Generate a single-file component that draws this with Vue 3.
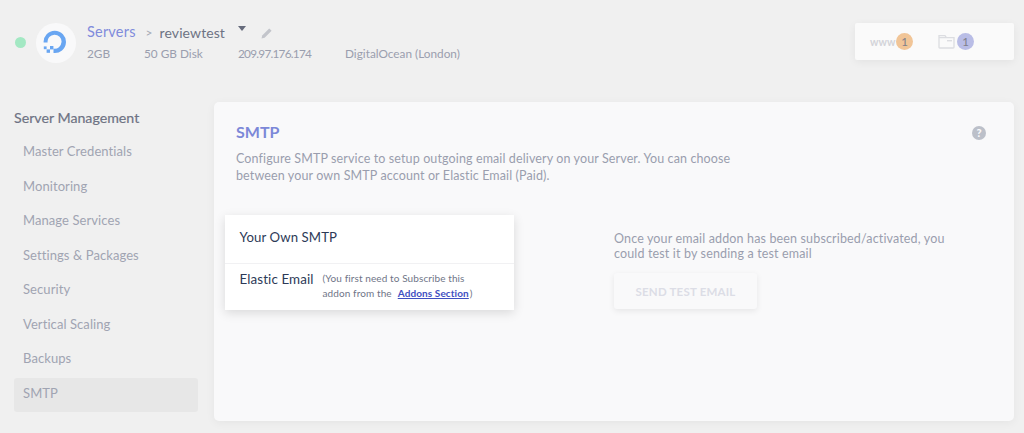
<script setup>
const items = ['Master Credentials','Monitoring','Manage Services','Settings & Packages','Security','Vertical Scaling','Backups','SMTP']
</script>

<template>
  <div class="page">
    <header class="top">
      <span class="dot"></span>
      <div class="logo">
        <svg width="26" height="26" viewBox="0 0 26 26">
          <path d="M10.5 23 V18.6 A7 7 0 1 0 4.6 12.5 H0.6 A11.2 11.2 0 1 1 10.5 23 Z" fill="#69a6f2"/>
          <rect x="7" y="16" width="3.4" height="3.4" fill="#69a6f2"/>
          <rect x="3.6" y="19.4" width="3.4" height="3.4" fill="#69a6f2"/>
          <rect x="0.8" y="16.4" width="2.8" height="2.8" fill="#69a6f2"/>
        </svg>
      </div>
      <div class="info">
        <div class="crumbs">
          <span class="servers">Servers</span>
          <span class="gt">&gt;</span>
          <span class="name">reviewtest</span>
          <span class="caret"></span>
          <svg class="pencil" width="12" height="12" viewBox="0 0 12 12"><path d="M0.5 11.5 L1.2 8.4 L8.2 1.4 L10.6 3.8 L3.6 10.8 Z" fill="#c3c5cb"/></svg>
        </div>
        <div class="meta">
          <span class="m1">2GB</span>
          <span class="m2">50 GB Disk</span>
          <span class="m3">209.97.176.174</span>
          <span>DigitalOcean (London)</span>
        </div>
      </div>
      <div class="widgets">
        <span class="www">www</span>
        <span class="badge orange">1</span>
        <svg class="folder" width="17" height="15" viewBox="0 0 17 15">
          <path d="M1 13.2 V1.6 H7 L8.4 3.6 H16 V13.2 Q16 14 15.2 14 H1.8 Q1 14 1 13.2 Z M1 3.6 H8.4" fill="none" stroke="#dcdde1" stroke-width="1.3"/>
          <rect x="9" y="6" width="5" height="1.4" fill="#dcdde1"/>
        </svg>
        <span class="badge purple">1</span>
      </div>
    </header>

    <div class="body">
      <aside class="side">
        <h3>Server Management</h3>
        <a v-for="i in items" :key="i" class="item" :class="{ active: i === 'SMTP' }">{{ i }}</a>
      </aside>

      <main class="card">
        <div class="head">
          <div>
            <h2>SMTP</h2>
            <p class="desc">Configure SMTP service to setup outgoing email delivery on your Server. You can choose between your own SMTP account or Elastic Email (Paid).</p>
          </div>
          <span class="help">?</span>
        </div>
        <div class="cols">
          <div class="options">
            <div class="opt first">Your Own SMTP</div>
            <div class="opt second">
              <span class="label">Elastic Email</span>
              <div class="note">
                <span>(You first need to Subscribe this</span>
                <div class="note-row">
                  <span>addon from the</span>
                  <a class="link">Addons Section</a>
                  <span class="close">)</span>
                </div>
              </div>
            </div>
          </div>
          <div class="test">
            <p>Once your email addon has been subscribed/activated, you could test it by sending a test email</p>
            <button class="btn">SEND TEST EMAIL</button>
          </div>
        </div>
      </main>
    </div>
  </div>
</template>

<style scoped>
.page {
  width: 1024px;
  height: 433px;
  overflow: hidden;
  background: #f0f0f0;
  font-family: "Lato", "Open Sans", sans-serif;
  color: #9a9eae;
  box-sizing: border-box;
}
.top {
  height: 102px;
  box-sizing: border-box;
  padding: 23px 10px 0 15px;
  display: flex;
  align-items: flex-start;
}
.dot {
  width: 11px;
  height: 11px;
  border-radius: 50%;
  background: #a3e8c3;
  margin: 14px 10px 0 0;
}
.logo {
  width: 40px;
  height: 40px;
  border-radius: 50%;
  background: #f9f9fa;
  display: flex;
  align-items: center;
  justify-content: center;
  margin-right: 11px;
}
.info { flex: 1; }
.crumbs {
  display: flex;
  align-items: center;
  height: 19px;
  margin-top: -1px;
}
.servers { font-size: 14.5px; color: #7f8bdc; letter-spacing: .2px; }
.gt { font-size: 12px; color: #a5a8b4; margin: 2px 7px 0 10px; }
.name { font-size: 14px; color: #6e7384; letter-spacing: .1px; margin-top: 2px; }
.caret {
  width: 0;
  height: 0;
  border-left: 4px solid transparent;
  border-right: 4px solid transparent;
  border-top: 5px solid #666b7c;
  margin: -7px 0 0 13px;
}
.pencil { margin: 3px 0 0 15px; }
.meta {
  display: flex;
  font-size: 11.8px;
  margin-top: 5px;
  color: #9a9eae;
}
.m1 { width: 57px; }
.m2 { width: 94px; }
.m3 { width: 107px; letter-spacing: -.75px; }
.widgets {
  width: 159px;
  height: 37px;
  background: #fafafa;
  border-radius: 2px;
  box-shadow: 0 2px 8px rgba(0,0,0,.06);
  display: flex;
  align-items: center;
  box-sizing: border-box;
  padding-left: 15px;
}
.www { font-size: 10.5px; font-weight: 700; color: #d3d4d9; letter-spacing: .1px; width: 26px; }
.badge {
  width: 17px;
  height: 17px;
  border-radius: 50%;
  font-size: 11.5px;
  color: #80808a;
  display: flex;
  align-items: center;
  justify-content: center;
}
.orange { background: #f1c597; }
.purple { background: #b9bde6; margin-left: 2px; }
.folder { margin-left: 25px; }
.body { display: flex; padding: 0 10px 0 14px; }
.side { width: 184px; margin-right: 16px; }
.side h3 {
  font-size: 14.2px;
  font-weight: 400;
  -webkit-text-stroke: .2px #6e7384;
  color: #6e7384;
  margin: 7px 0 9px;
  line-height: 18px;
}
.item {
  display: block;
  height: 34.5px;
  line-height: 30px;
  padding-left: 9px;
  font-size: 13px;
  letter-spacing: .08px;
  color: #a0a4b2;
  border-radius: 3px;
}
.active { background: #e7e7e7; }
.card {
  width: 800px;
  height: 319px;
  background: #f9f9fa;
  border-radius: 5px;
  box-shadow: 0 2px 10px rgba(0,0,0,.05);
  box-sizing: border-box;
  padding: 20px 0 0 11px;
}
.head {
  display: flex;
  justify-content: space-between;
  padding: 0 28px 0 11px;
}
h2 {
  margin: 0 0 9px;
  font-size: 16px;
  line-height: 19px;
  font-weight: 700;
  color: #7c88d8;
}
.desc {
  margin: 0;
  width: 520px;
  font-size: 12.5px;
  line-height: 17px;
  letter-spacing: .12px;
  color: #9a9eae;
}
.help {
  width: 14px;
  height: 14px;
  margin-top: 4px;
  border-radius: 50%;
  background: #bcc0c9;
  color: #f9f9fa;
  font-size: 11px;
  font-weight: 900;
  line-height: 14px;
  text-align: center;
}
.cols { display: flex; margin-top: 31px; }
.options {
  width: 289px;
  height: 95px;
  background: #fff;
  box-shadow: 0 3px 10px rgba(0,0,0,.13);
  margin-right: 100px;
  color: #2d3a57;
  font-size: 13.4px;
  letter-spacing: .1px;
}
.opt { padding-left: 14.5px; box-sizing: border-box; }
.first {
  height: 49px;
  padding-top: 13px;
  line-height: 18px;
  font-size: 13.2px;
  border-bottom: 1px solid #f1f1f3;
}
.second { display: flex; padding-top: 6px; }
.label { line-height: 18px; width: 83px; flex: none; }
.note {
  display: flex;
  flex-direction: column;
  font-size: 10px;
  line-height: 15px;
  color: #6f7587;
  letter-spacing: .1px;
  padding-top: 1px;
}
.note-row { display: flex; }
.link { color: #3f4fc2; font-weight: 700; text-decoration: underline; margin-left: 6px; }
.close { margin-left: 1px; }
.test { padding-top: 16px; }
.test p {
  margin: 0 0 12px;
  width: 345px;
  font-size: 12.5px;
  line-height: 15px;
  letter-spacing: .15px;
  color: #9a9eae;
}
.btn {
  width: 143px;
  height: 36px;
  border: 0;
  border-radius: 3px;
  background: #f9f9fa;
  box-shadow: 0 2px 6px rgba(0,0,0,.08);
  font-family: inherit;
  font-size: 11.5px;
  font-weight: 700;
  letter-spacing: .2px;
  color: #dcdde6;
  padding: 0;
}
</style>
